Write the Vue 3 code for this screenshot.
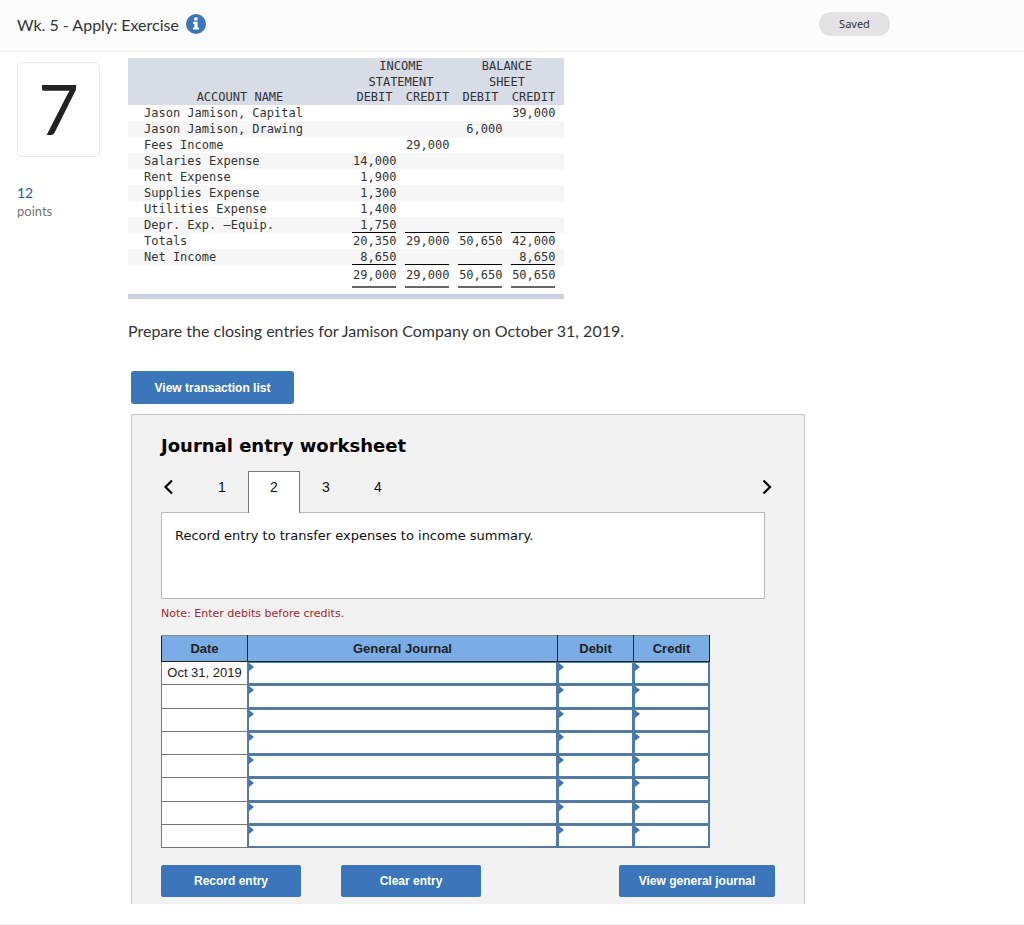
<template>
  <div class="page">
    <header class="page-header">
      <h1 class="page-title">Wk. 5 - Apply: Exercise</h1>
      <button class="info-btn" type="button" aria-label="Information">
        <svg width="20" height="20" viewBox="0 0 20 20">
          <circle cx="10" cy="10" r="10" fill="#3a76b9" />
          <path d="M8.2 3.6h3.4v2.9H8.2zM7 7.8h4.6v5.6H13v2.1H7v-2.1h1.4V9.9H7z" fill="#fff" />
        </svg>
      </button>
      <span class="saved-badge">Saved</span>
    </header>

    <main class="question">
      <aside class="question-side">
        <div class="question-number">7</div>
        <div class="points-value">12</div>
        <div class="points-label">points</div>
      </aside>

      <section class="question-body">
        <table class="ledger">
          <colgroup>
            <col />
            <col v-for="n in 4" :key="n" class="ledger-col" />
            <col class="ledger-end" />
          </colgroup>
          <thead>
            <tr>
              <th></th>
              <th colspan="2">INCOME</th>
              <th colspan="2">BALANCE</th>
              <th></th>
            </tr>
            <tr>
              <th></th>
              <th colspan="2">STATEMENT</th>
              <th colspan="2">SHEET</th>
              <th></th>
            </tr>
            <tr class="ledger-columns">
              <th class="ledger-name-head">ACCOUNT NAME</th>
              <th>DEBIT</th>
              <th>CREDIT</th>
              <th>DEBIT</th>
              <th>CREDIT</th>
              <th></th>
            </tr>
          </thead>
          <tbody>
            <tr v-for="row in accounts" :key="row.name" :class="row.line">
              <td class="ledger-name">{{ row.name }}</td>
              <td v-for="(value, i) in row.values" :key="i">
                <div class="amount">{{ value }}</div>
              </td>
              <td></td>
            </tr>
          </tbody>
        </table>

        <p class="prompt">Prepare the closing entries for Jamison Company on October 31, 2019.</p>

        <button class="btn btn-list" type="button">View transaction list</button>

        <div class="worksheet">
          <h2 class="worksheet-title">Journal entry worksheet</h2>

          <nav class="tabs">
            <button class="arrow" type="button" aria-label="Previous" @click="move(-1)">
              <svg width="12" height="16" viewBox="0 0 12 16">
                <path d="M9 1.5L2.5 8L9 14.5" fill="none" stroke="#000" stroke-width="2.2" />
              </svg>
            </button>
            <button
              v-for="n in 4"
              :key="n"
              type="button"
              :class="['tab', { active: n === current }]"
              @click="current = n"
            >
              {{ n }}
            </button>
            <button class="arrow arrow-next" type="button" aria-label="Next" @click="move(1)">
              <svg width="12" height="16" viewBox="0 0 12 16">
                <path d="M2.5 1.5L9 8L2.5 14.5" fill="none" stroke="#000" stroke-width="2.2" />
              </svg>
            </button>
          </nav>

          <div class="instruction">Record entry to transfer expenses to income summary.</div>
          <p class="note">Note: Enter debits before credits.</p>

          <table class="journal">
            <thead>
              <tr>
                <th class="col-date">Date</th>
                <th>General Journal</th>
                <th class="col-amount">Debit</th>
                <th class="col-amount">Credit</th>
              </tr>
            </thead>
            <tbody>
              <tr v-for="(entry, i) in entries" :key="i">
                <td class="date">{{ entry.date }}</td>
                <td v-for="field in fields" :key="field.key" class="entry">
                  <input
                    v-model="entry[field.key]"
                    type="text"
                    :aria-label="`${field.label}, row ${i + 1}`"
                  />
                </td>
              </tr>
            </tbody>
          </table>

          <div class="actions">
            <button class="btn" type="button">Record entry</button>
            <button class="btn" type="button" @click="clearEntry">Clear entry</button>
            <button class="btn btn-journal" type="button">View general journal</button>
          </div>
        </div>
      </section>
    </main>

    <footer class="page-footer"></footer>
  </div>
</template>

<script setup>
import { ref } from 'vue';

const accounts = [
  { name: 'Jason Jamison, Capital', values: ['', '', '', '39,000'] },
  { name: 'Jason Jamison, Drawing', values: ['', '', '6,000', ''] },
  { name: 'Fees Income', values: ['', '29,000', '', ''] },
  { name: 'Salaries Expense', values: ['14,000', '', '', ''] },
  { name: 'Rent Expense', values: ['1,900', '', '', ''] },
  { name: 'Supplies Expense', values: ['1,300', '', '', ''] },
  { name: 'Utilities Expense', values: ['1,400', '', '', ''] },
  { name: 'Depr. Exp. –Equip.', values: ['1,750', '', '', ''], line: 'ruled' },
  { name: 'Totals', values: ['20,350', '29,000', '50,650', '42,000'] },
  { name: 'Net Income', values: ['8,650', '', '', '8,650'], line: 'ruled' },
  { name: '', values: ['29,000', '29,000', '50,650', '50,650'], line: 'final' }
];

const fields = [
  { key: 'account', label: 'General Journal' },
  { key: 'debit', label: 'Debit' },
  { key: 'credit', label: 'Credit' }
];

const current = ref(2);

const entries = ref(
  Array.from({ length: 8 }, (_, i) => ({
    date: i === 0 ? 'Oct 31, 2019' : '',
    account: '',
    debit: '',
    credit: ''
  }))
);

const move = (step) => {
  current.value = Math.min(4, Math.max(1, current.value + step));
};

const clearEntry = () => {
  entries.value.forEach((entry) => {
    entry.account = '';
    entry.debit = '';
    entry.credit = '';
  });
};
</script>

<style>
body {
  margin: 0;
  background: #fff;
}
</style>

<style scoped>
.page {
  font-family: Lato, sans-serif;
  color: #333;
}

.page-header {
  display: flex;
  align-items: center;
  height: 52px;
  padding: 0 134px 3px 17px;
  box-sizing: border-box;
  background: #fcfcfc;
  border-bottom: 1px solid #ececec;
}

.page-title {
  margin: 0;
  font-size: 16px;
  font-weight: 400;
}

.info-btn {
  display: flex;
  margin-left: 7px;
  padding: 0;
  border: none;
  background: none;
  cursor: pointer;
}

.saved-badge {
  margin-left: auto;
  width: 71px;
  border-radius: 12px;
  background: #e4e2e5;
  font-family: "Noto Sans", sans-serif;
  font-size: 11px;
  line-height: 24px;
  text-align: center;
}

.question {
  display: flex;
  gap: 28px;
  padding: 6px 20px 0 17px;
}

.question-side {
  flex: 0 0 83px;
  padding-top: 4px;
}

.question-number {
  height: 95px;
  box-sizing: border-box;
  border: 1px solid #ebebeb;
  border-radius: 5px;
  color: #222;
  font-size: 70px;
  line-height: 91px;
  text-align: center;
}

.points-value {
  margin-top: 26px;
  color: #2c5c94;
  font-size: 14px;
  line-height: 20px;
}

.points-label {
  color: #757575;
  font-size: 13px;
  line-height: 16px;
}

.question-body {
  flex: 1;
  min-width: 0;
  max-width: 677px;
}

/* 试算表 */
.ledger {
  width: 100%;
  max-width: 436px;
  table-layout: fixed;
  border-collapse: collapse;
  border-bottom: 5px solid #cbd1de;
  font-family: "DejaVu Sans Mono", monospace;
  font-size: 12px;
  line-height: 16px;
}

.ledger-col {
  width: 53px;
}

.ledger-end {
  width: 4px;
}

.ledger th,
.ledger td {
  padding: 0;
  font-weight: 400;
}

.ledger thead {
  background: #d8dce7;
}

.ledger-columns {
  line-height: 15px;
}

.ledger .ledger-name-head {
  padding-left: 4px;
}

.ledger .ledger-name {
  padding-left: 16px;
}

.ledger tbody tr:nth-child(even) {
  background: #f6f6f6;
}

.amount {
  width: 44px;
  height: 16px;
  margin: 0 auto;
  box-sizing: border-box;
  text-align: right;
}

.ruled .amount {
  border-bottom: 1px solid #000;
}

.final td {
  padding: 2px 0 6px;
}

.final .amount {
  height: 21px;
  border-bottom: 2px solid #666;
}

.prompt {
  margin: 22px 0 30px;
  font-size: 16px;
  line-height: 20px;
}

.btn {
  width: 140px;
  height: 32px;
  padding: 0;
  border: none;
  border-radius: 2px;
  background: #3a76b9;
  color: #fff;
  font-family: "Liberation Sans", Arial, sans-serif;
  font-size: 12px;
  font-weight: 700;
  cursor: pointer;
}

.btn-list {
  display: block;
  width: 163px;
  height: 33px;
  margin-left: 3px;
  border-radius: 3px;
}

/* 分录工作表 */
.worksheet {
  margin: 10px 0 0 3px;
  padding: 20px 29px 7px;
  border: 1px solid #c4c4c4;
  border-bottom: none;
  background: #f2f2f2;
  color: #111;
}

.worksheet-title {
  margin: 0;
  color: #000;
  font-family: Verdana, "DejaVu Sans", sans-serif;
  font-size: 18px;
  font-weight: 700;
  line-height: 22px;
}

.tabs {
  display: flex;
  margin-top: 14px;
}

.arrow {
  display: flex;
  align-items: center;
  width: 35px;
  height: 32px;
  padding: 0 0 0 2px;
  border: none;
  background: none;
  cursor: pointer;
}

.arrow-next {
  width: 16px;
  margin-left: auto;
}

.tab {
  width: 52px;
  height: 42px;
  padding: 0 0 11px;
  border: 1px solid transparent;
  border-bottom: none;
  background: none;
  color: #111;
  font-family: "Liberation Sans", Arial, sans-serif;
  font-size: 14px;
  cursor: pointer;
}

.tab.active {
  position: relative;
  border-color: #777;
  background: #fff;
}

.instruction {
  min-height: 87px;
  margin: -1px 10px 0 0;
  padding: 13px;
  box-sizing: border-box;
  border: 1px solid #b8b8b8;
  background: #fff;
  font-family: Verdana, "DejaVu Sans", sans-serif;
  font-size: 13px;
  line-height: 20px;
}

.note {
  margin: 7px 0 13px;
  color: #a9272d;
  font-family: Verdana, "DejaVu Sans", sans-serif;
  font-size: 11px;
  line-height: 16px;
}

.journal {
  width: 100%;
  max-width: 549px;
  height: 213px;
  table-layout: fixed;
  border-collapse: collapse;
  color: #222;
  font-family: "Liberation Sans", Arial, sans-serif;
  font-size: 13px;
}

.journal th {
  height: 25px;
  padding: 0;
  border: 1px solid #222;
  border-top-color: #888;
  background: #7aade5;
}

.journal .col-date {
  width: 85px;
}

.journal .col-amount {
  width: 75px;
}

.journal td {
  padding: 0;
  border: 1px solid #777;
  background: #fff;
}

.journal .date {
  line-height: 20px;
  text-align: center;
  white-space: nowrap;
}

.journal .entry {
  position: relative;
  height: 22px;
  border-color: #5a7896;
}

.entry input {
  display: block;
  width: 100%;
  height: 100%;
  padding: 0 6px;
  box-sizing: border-box;
  border: 1px solid #507cad;
  border-radius: 0;
  background: #fff;
  font: inherit;
  outline: none;
}

.entry input:focus {
  background: #eef5fd;
}

.entry::after {
  content: "";
  position: absolute;
  top: 1px;
  left: 1px;
  border: 4px solid transparent;
  border-right: none;
  border-left: 5px solid #3a76b9;
  pointer-events: none;
}

.actions {
  display: flex;
  gap: 40px;
  margin-top: 17px;
}

.btn-journal {
  width: 156px;
  margin-left: auto;
}

.page-footer {
  margin-top: 20px;
  border-top: 1px solid #ececec;
}
</style>
